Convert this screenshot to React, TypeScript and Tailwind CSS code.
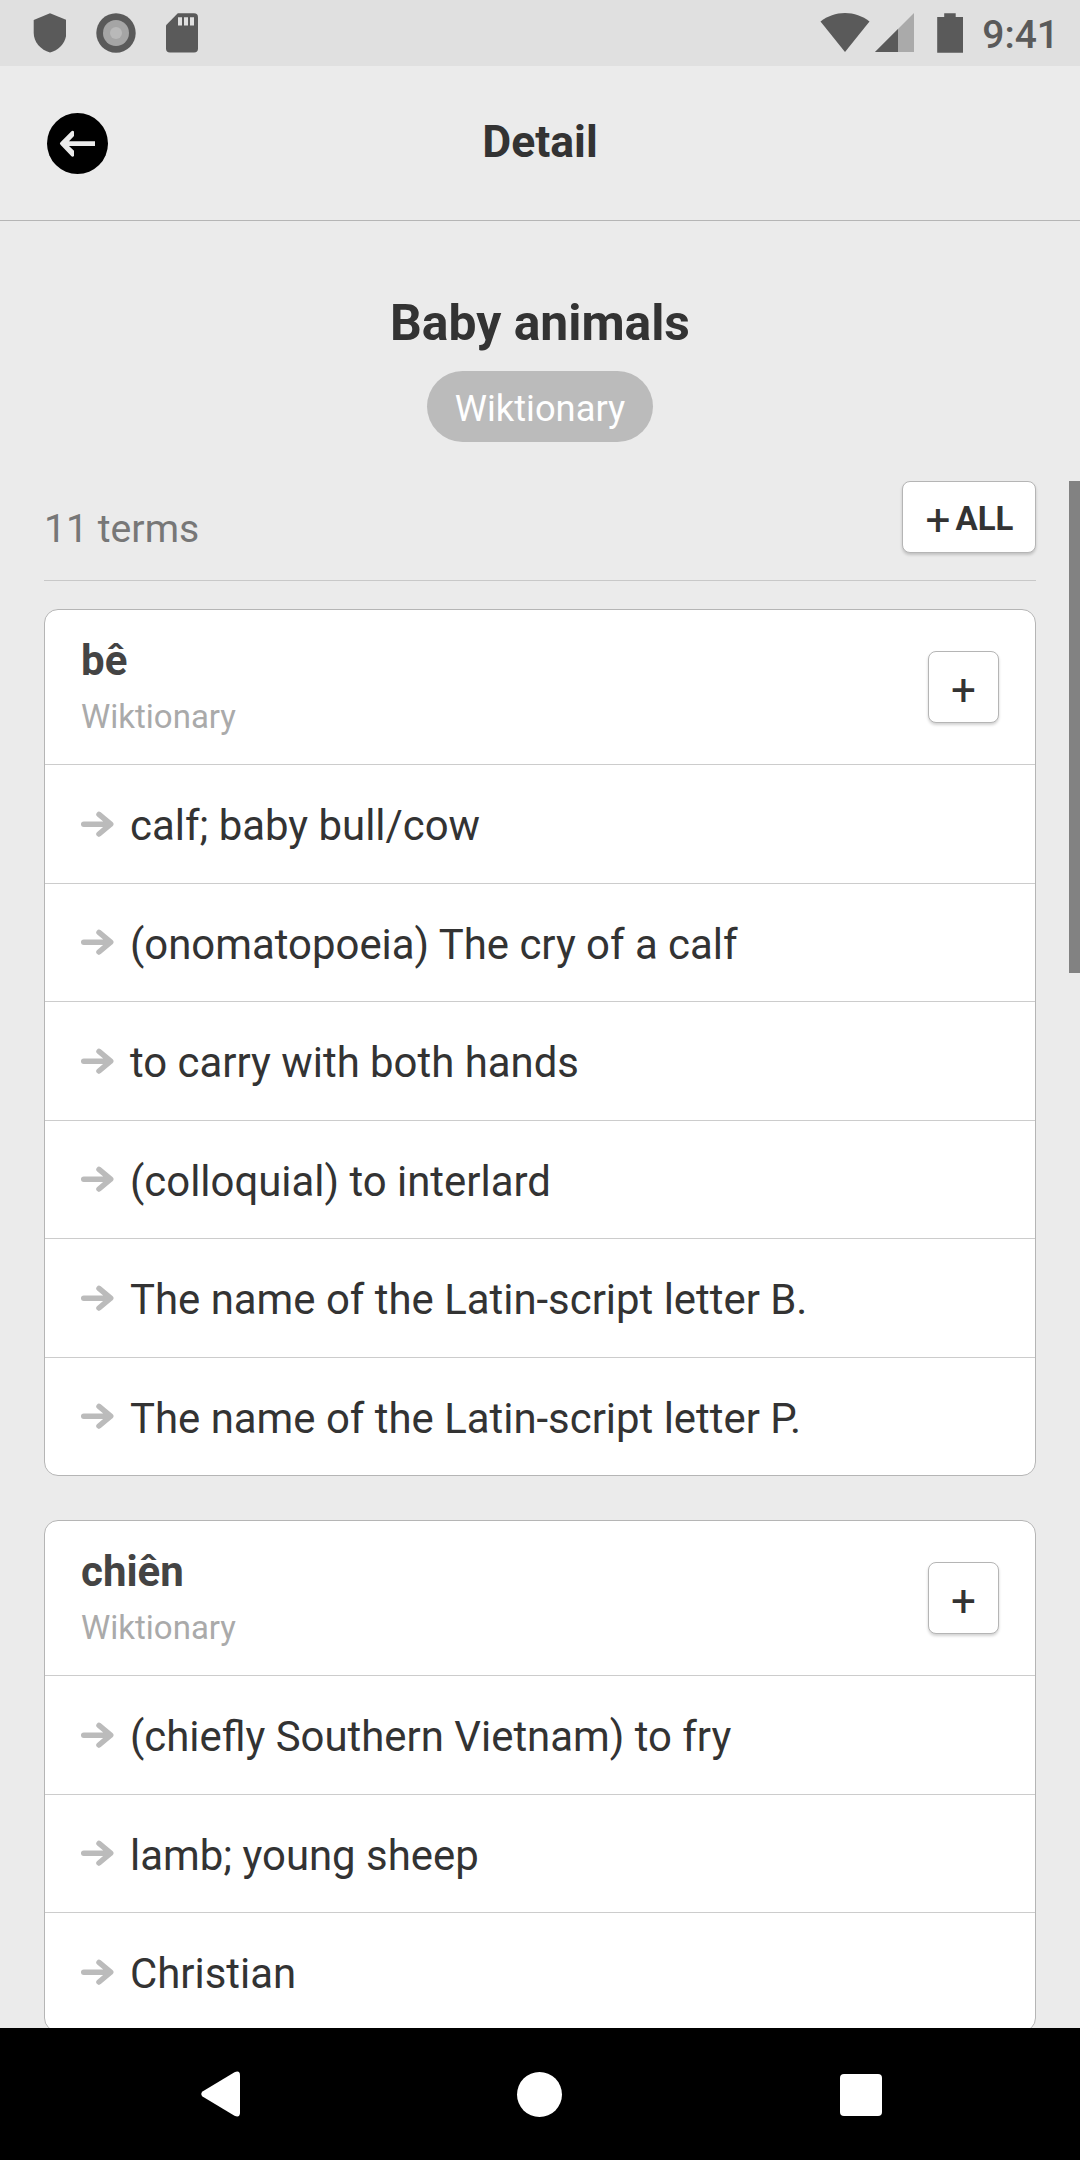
type Term = { word: string; source: string; meanings: string[] };

const terms: Term[] = [
  {
    word: "bê",
    source: "Wiktionary",
    meanings: [
      "calf; baby bull/cow",
      "(onomatopoeia) The cry of a calf",
      "to carry with both hands",
      "(colloquial) to interlard",
      "The name of the Latin-script letter B.",
      "The name of the Latin-script letter P.",
    ],
  },
  {
    word: "chiên",
    source: "Wiktionary",
    meanings: ["(chiefly Southern Vietnam) to fry", "lamb; young sheep", "Christian"],
  },
];

function StatusBar() {
  return (
    <div className="flex h-[66px] shrink-0 items-center justify-between bg-[#e0e0e0] pl-[33px] pr-[21px] text-[#5a5a5a]">
      <div className="flex items-center gap-[30px]">
        <svg className="h-10 w-[33px]" viewBox="0 0 33 40" fill="currentColor">
          <path d="M17 0.2L33.3 7v13c0 9-7 17-16.3 19.5C7.700 37 0.700 29 0.700 20V7z" />
        </svg>
        <svg className="h-10 w-10" viewBox="0 0 40 40">
          <circle cx="20" cy="20" r="19.700" fill="#5a5a5a" />
          <circle cx="20" cy="20" r="13" fill="#a5a5a5" />
          <circle cx="20" cy="20" r="6" fill="#b9b9b9" />
        </svg>
        <svg className="h-10 w-8" viewBox="0 0 32 40">
          <path d="M11.800 0.300H28a4 4 0 0 1 4 4V35.500a4 4 0 0 1-4 4H4a4 4 0 0 1-4-4V12.200z" fill="#5a5a5a" />
          <path d="M12 4.200h4v8.200h-4zM18 4.200h4v8.200h-4zM24 4.200h4v8.200h-4z" fill="#e0e0e0" />
        </svg>
      </div>
      <div className="flex items-center">
        <svg className="h-10 w-[50px]" viewBox="0 0 50 40" fill="currentColor">
          <path d="M0.500 8.500C7.500 3 16 0 25 0s17.500 3 24.500 8.500L25 39z" />
        </svg>
        <svg className="ml-1 h-10 w-10" viewBox="0 0 40 40">
          <path d="M40 0V39H1z" fill="#aaaaaa" />
          <path d="M24 16V39H1z" fill="#5a5a5a" />
        </svg>
        <svg className="ml-[22px] h-10 w-[28px]" viewBox="0 0 28 40" fill="currentColor">
          <path d="M8.200 0.200h11.500V4H27v35.800H1.200V4h7z" />
        </svg>
        <span className="ml-[18px] mt-[4px] text-[39px] font-medium leading-none">9:41</span>
      </div>
    </div>
  );
}

function Header() {
  return (
    <header className="grid h-[155px] shrink-0 grid-cols-[1fr_auto_1fr] items-center border-b border-[#b5b5b5] px-[47px]">
      <button className="h-[61px] w-[61px]">
        <svg viewBox="0 0 61 61" className="h-[61px] w-[61px]">
          <circle cx="30.500" cy="30.500" r="30.500" fill="#000" />
          <path
            d="M48 28.300H22l5-5.200V18.500q-1.500-1.500-2.800 0L13.500 29.200q-1.300 1.300 0 2.600L24.200 43q1.300 1.300 2.800 0V37.800l-5-4.800H48z"
            fill="#ebebeb"
          />
        </svg>
      </button>
      <h1 className="-mt-[3px] text-[44.500px] font-bold leading-[52px]">Detail</h1>
      <span />
    </header>
  );
}

function PlusButton({ label }: { label?: string }) {
  return (
    <button
      className={
        "flex h-[72px] shrink-0 items-center justify-center rounded-[8px] border border-[#b5b5b5] bg-white shadow-[0_2px_3px_rgba(0,0,0,0.18)] " +
        (label ? "w-[134px] gap-[5px] pl-px" : "w-[71px]")
      }
    >
      <span className="mt-[5px] text-[44px] font-normal leading-none">+</span>
      {label && <span className="mt-[3px] text-[33px] font-bold leading-none">{label}</span>}
    </button>
  );
}

function TermCard({ term }: { term: Term }) {
  return (
    <section className="rounded-[14px] border border-[#b5b5b5] bg-white">
      <div className="flex h-[154px] items-center justify-between pl-9 pr-9">
        <div className="flex flex-col">
          <h3 className="mt-px text-[42px] font-bold leading-[56px] text-[#444]">{term.word}</h3>
          <p className="mt-px -mb-0.5 text-[33px] leading-[54px] text-[#aaa]">{term.source}</p>
        </div>
        <PlusButton />
      </div>
      <ul>
        {term.meanings.map((m) => (
          <li key={m} className="flex h-[118.500px] items-center border-t border-[#ccc] pl-9">
            <svg className="h-[26px] w-[34px]" viewBox="0 0 34 26" fill="none">
              <path
                d="M2.700 13.200H28M18 3.400L29.700 13.200L18 23"
                stroke="#bbb"
                strokeWidth="5.500"
                strokeLinecap="round"
                strokeLinejoin="round"
              />
            </svg>
            <span className="ml-[15px] mt-[5px] text-[41.900px] leading-[56px]">{m}</span>
          </li>
        ))}
      </ul>
    </section>
  );
}

function NavBar() {
  return (
    <nav className="flex h-[132px] shrink-0 items-center justify-between bg-black pl-[201px] pr-[198px]">
      <svg className="h-[46px] w-[39px]" viewBox="0 0 39 46" fill="#fff">
        <path d="M1.500 20.500L33.500 1.200Q39 -1 39 4.200V41.800Q39 47 33.500 44.800L1.500 25.500Q-1 23 1.500 20.500z" />
      </svg>
      <div className="mr-px h-[45px] w-[45px] rounded-full bg-white" />
      <div className="mt-0.5 h-[42px] w-[42px] rounded-[4px] bg-white" />
    </nav>
  );
}

export default function App() {
  return (
    <div className="flex h-[2160px] w-[1080px] flex-col overflow-hidden bg-[#ebebeb] font-['Roboto',sans-serif] text-[#333]">
      <StatusBar />
      <Header />
      <div className="flex h-[260px] shrink-0 flex-col items-center pt-[73px]">
        <h2 className="text-[49.800px] font-bold leading-[58px]">Baby animals</h2>
        <div className="mt-[19px] flex h-[71px] w-[226px] items-center justify-center rounded-full bg-[#bbb] pt-[5px] text-[36.300px] text-white">
          Wiktionary
        </div>
      </div>
      <main className="relative min-h-0 flex-1 overflow-hidden px-11">
        <div className="flex h-[100px] items-start justify-between border-b border-[#c8c8c8]">
          <p className="mt-[25px] text-[39.200px] leading-[46px] text-[#777]">11 terms</p>
          <PlusButton label="ALL" />
        </div>
        <div className="mt-7 flex flex-col gap-11">
          {terms.map((t) => (
            <TermCard key={t.word} term={t} />
          ))}
        </div>
        <div className="absolute right-0 top-0 h-[492px] w-[11px] bg-[#828282]" />
      </main>
      <NavBar />
    </div>
  );
}
